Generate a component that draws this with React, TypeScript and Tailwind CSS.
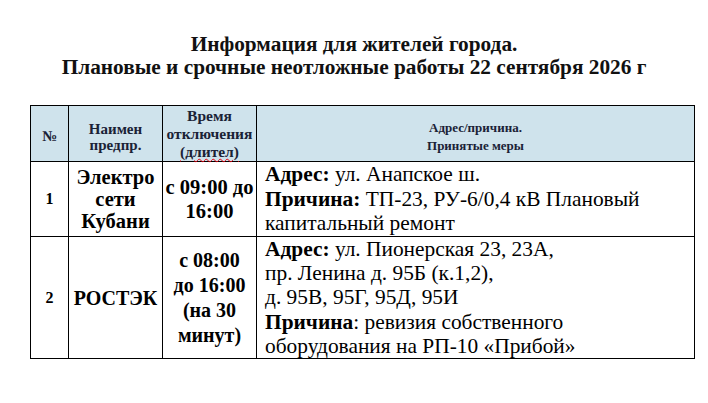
export default function App() {
  return (
    <div className="w-[708px] h-[403px] bg-white overflow-hidden font-['Liberation_Serif','Times_New_Roman',serif]">
      {/* Заголовок */}
      <div className="pt-[33px] text-center font-bold text-[21.3px] leading-[23px] text-[#111]">
        <div>Информация для жителей города.</div>
        <div>Плановые и срочные неотложные работы 22 сентября 2026 г</div>
      </div>

      <table className="mt-[26px] ml-[30px] w-[665px] border-collapse table-fixed text-black">
        <colgroup>
          <col className="w-[38px]" />
          <col className="w-[94px]" />
          <col className="w-[94px]" />
          <col />
        </colgroup>
        <thead>
          <tr className="h-[56px] bg-[#cfe3ec] text-[#1a2236] font-bold text-center align-middle">
            <th className="border border-black p-0 pt-[6px] text-[15px]">№</th>
            <th className="border border-black p-0 pt-[6px] text-[15px] leading-[16px]">
              Наимен<br />предпр.
            </th>
            <th className="border border-black p-0 text-[15.5px] leading-[18px] whitespace-nowrap">
              Время<br />отключения<br />
              <span className="underline decoration-wavy decoration-red-600 decoration-1">(длител)</span>
            </th>
            <th className="border border-black p-0 pt-[6px] text-[13px] leading-[18px]">
              Адрес/причина.<br />Принятые меры
            </th>
          </tr>
        </thead>
        <tbody>
          <tr className="h-[75px] align-middle">
            <td className="border border-black p-0 text-center font-bold text-[16px]">1</td>
            <td className="border border-black p-0 text-center font-bold text-[20.5px] leading-[22px]">
              Электро<br />сети<br />Кубани
            </td>
            <td className="border border-black p-0 text-center font-bold text-[20.5px] leading-[24px] whitespace-nowrap">
              с 09:00 до<br />16:00
            </td>
            <td className="border border-black p-0 pl-[8px] text-[21.4px] leading-[24.4px] whitespace-nowrap">
              <b>Адрес:</b> ул. Анапское ш.<br />
              <b>Причина:</b> ТП-23, РУ-6/0,4 кВ Плановый<br />
              капитальный ремонт
            </td>
          </tr>
          <tr className="h-[122px] align-middle">
            <td className="border border-black p-0 text-center font-bold text-[16px]">2</td>
            <td className="border border-black p-0 text-center font-bold text-[20px]">РОСТЭК</td>
            <td className="border border-black p-0 text-center font-bold text-[20px] leading-[25px] whitespace-nowrap">
              с 08:00<br />до 16:00<br />(на 30<br />минут)
            </td>
            <td className="border border-black p-0 pl-[8px] text-[21.4px] leading-[24.2px] whitespace-nowrap">
              <b>Адрес:</b> ул. Пионерская 23, 23А,<br />
              пр. Ленина д. 95Б (к.1,2),<br />
              д. 95В, 95Г, 95Д, 95И<br />
              <b>Причина</b>: ревизия собственного<br />
              оборудования на РП-10 «Прибой»
            </td>
          </tr>
        </tbody>
      </table>
    </div>
  )
}
